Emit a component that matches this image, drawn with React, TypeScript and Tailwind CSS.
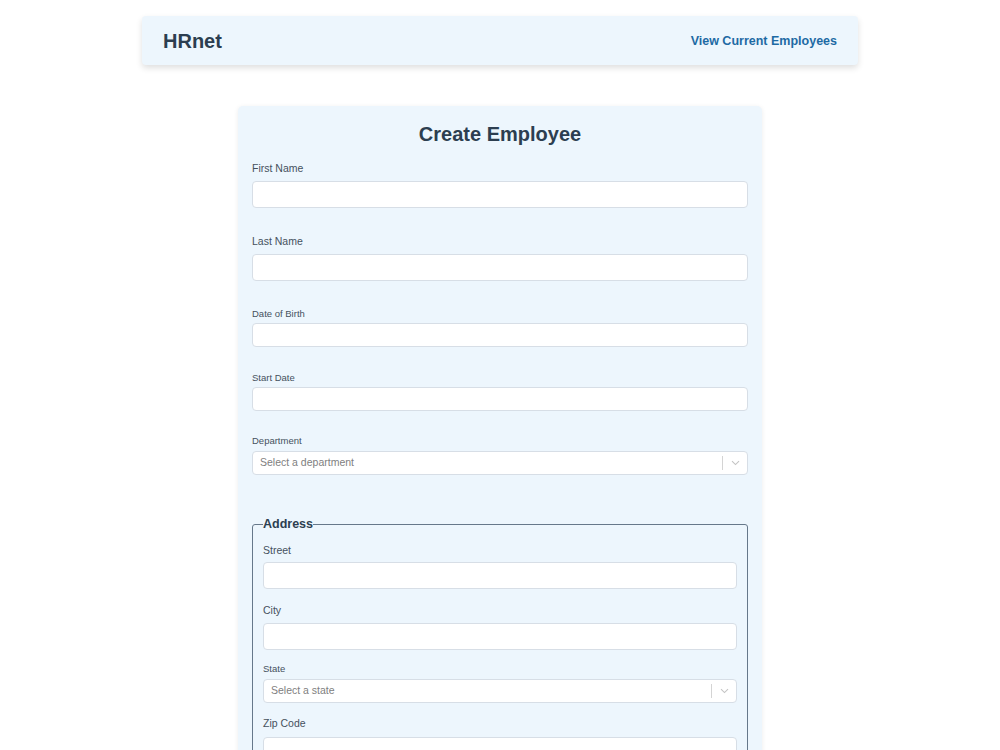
import React from 'react';

const font = { fontFamily: '"Liberation Sans", Arial, sans-serif' };

function TextField({ label, small }: { label: string; small?: boolean }) {
    return (
        <div>
            <label
                className={
                    small
                        ? 'block text-[9.5px] leading-[12px] text-[#45515d] mb-[2px]'
                        : 'block text-[10.5px] leading-[13px] text-[#45515d] mb-[6px]'
                }
            >
                {label}
            </label>
            <input
                type="text"
                className={
                    (small ? 'h-[24px] ' : 'h-[27px] ') +
                    'w-full bg-white border border-[#d7dee6] rounded-[4px] outline-none px-2 text-[11px]'
                }
            />
        </div>
    );
}

function SelectField({ label, placeholder }: { label: string; placeholder: string }) {
    return (
        <div>
            <label className="block text-[9.5px] leading-[12px] text-[#45515d] mb-[4px]">{label}</label>
            <div className="h-[24px] w-full bg-white border border-[#d7dee6] rounded-[4px] flex items-center">
                <span className="flex-1 pl-[7px] text-[10.5px] text-[#808080]">{placeholder}</span>
                <span className="w-px h-[14px] bg-[#d4d4d4]" />
                <span className="w-[24px] flex items-center justify-center">
                    <svg width="9" height="6" viewBox="0 0 9 6" fill="none">
                        <path d="M1 1.2 L4.5 4.6 L8 1.2" stroke="#c4c4c4" strokeWidth="1.1" />
                    </svg>
                </span>
            </div>
        </div>
    );
}

export default function App() {
    return (
        <div className="min-h-screen bg-white pt-4" style={font}>
            <header className="w-[716px] mx-auto h-[49px] bg-[#edf6fd] rounded-[4px] shadow-[0_3px_6px_rgba(0,0,0,0.13)] flex items-center justify-between pl-[21px] pr-[21px]">
                <h1 className="text-[20px] font-bold text-[#2c3e50]">HRnet</h1>
                <a href="#" className="text-[12.5px] font-bold text-[#1d6aa4] mt-px">
                    View Current Employees
                </a>
            </header>

            <main className="w-[524px] mx-auto mt-[41px] bg-[#edf6fd] rounded-[5px] shadow-[0_1px_5px_rgba(0,0,0,0.08)] px-[14px] pt-[16px] pb-6">
                <h2 className="text-[20px] leading-[24px] font-bold text-[#2c3e50] text-center mb-[16px]">
                    Create Employee
                </h2>

                <form>
                    <TextField label="First Name" />
                    <div className="mt-[27px]">
                        <TextField label="Last Name" />
                    </div>
                    <div className="mt-[27px]">
                        <TextField label="Date of Birth" small />
                    </div>
                    <div className="mt-[25px]">
                        <TextField label="Start Date" small />
                    </div>
                    <div className="mt-[24px]">
                        <SelectField label="Department" placeholder="Select a department" />
                    </div>

                    <fieldset className="mt-[42px] border border-[#66788a] rounded-[3px] px-[10px] pb-4">
                        <legend className="text-[12.5px] leading-[15px] font-bold text-[#2c3e50]">Address</legend>
                        <div className="pt-[11.5px]">
                            <label className="block text-[10.5px] leading-[13px] text-[#45515d] mb-[5px]">Street</label>
                            <input className="h-[27px] w-full bg-white border border-[#d7dee6] rounded-[4px] outline-none" />
                        </div>
                        <div className="mt-[15.5px]">
                            <label className="block text-[10.5px] leading-[13px] text-[#45515d] mb-[5.5px]">City</label>
                            <input className="h-[27px] w-full bg-white border border-[#d7dee6] rounded-[4px] outline-none" />
                        </div>
                        <div className="mt-[13px]">
                            <SelectField label="State" placeholder="Select a state" />
                        </div>
                        <div className="mt-[14.5px]">
                            <label className="block text-[10.5px] leading-[13px] text-[#45515d] mb-[6.5px]">Zip Code</label>
                            <input className="h-[27px] w-full bg-white border border-[#d7dee6] rounded-[4px] outline-none" />
                        </div>
                    </fieldset>
                </form>
            </main>
        </div>
    );
}
